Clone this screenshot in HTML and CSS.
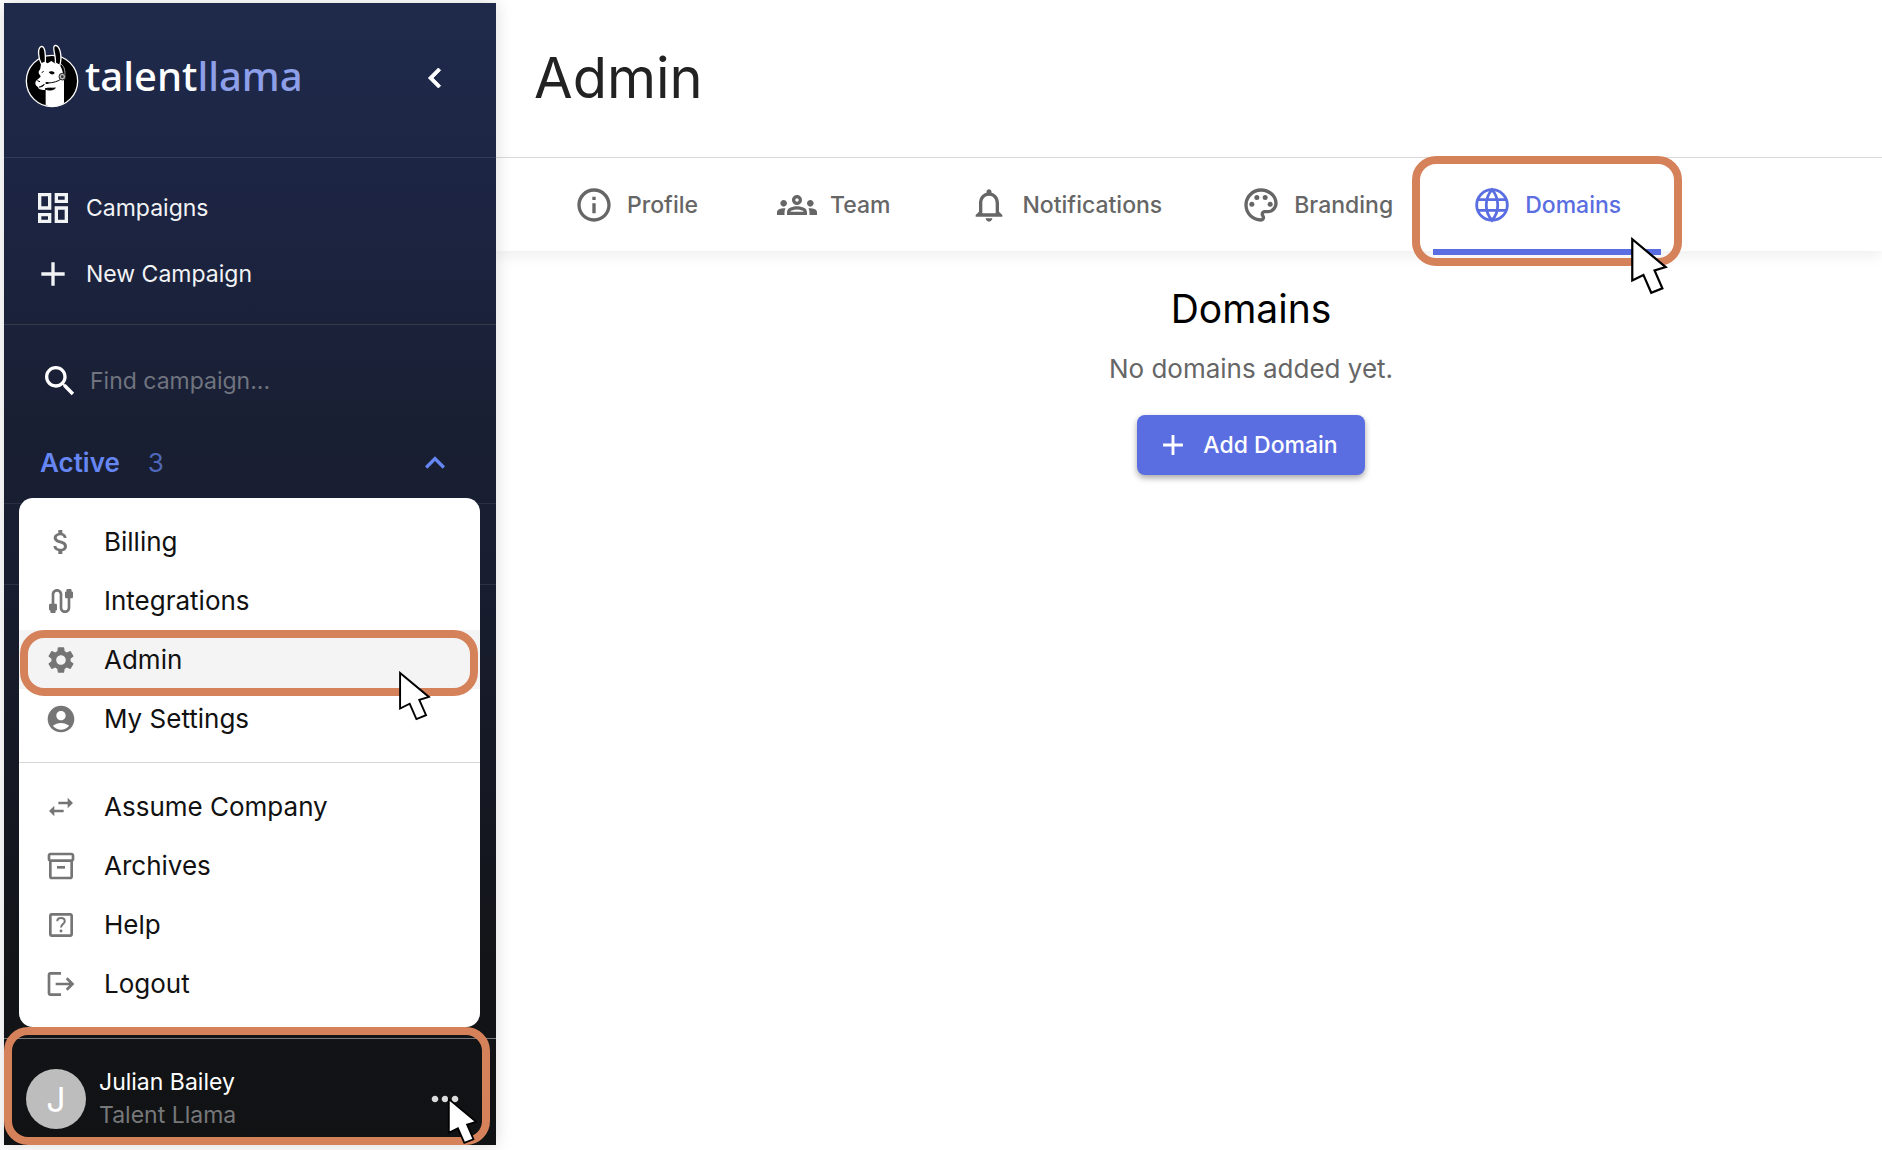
FILE: index.html
```html
<!DOCTYPE html>
<html lang="en">
<head>
    <meta charset="UTF-8">
    <meta name="viewport" content="width=device-width, initial-scale=1.0">
    <title>Admin - Talent Llama</title>
    <link rel="stylesheet" href="styles.css">
</head>
<body>
    <aside class="sidebar">
        <div class="sidebar-header">
            <a class="logo" href="#">
                <svg class="logo-mark" viewBox="16 26 162 192">
                    <circle cx="97" cy="137" r="77" fill="#000" stroke="#fff" stroke-width="4"/>
                    <path d="M66 88C54 66 54 38 64 34C76 30 78 56 77 82Z" fill="#000" stroke="#fff" stroke-width="4"/>
                    <path d="M107 82C110 62 96 36 105 31C118 27 130 56 120 92Z" fill="#000" stroke="#fff" stroke-width="4"/>
                    <path d="M65 83L76 79L84 84L95 77L105 84L117 86C128 96 132 118 133 140V204C116 216 94 216 78 209V164C66 165 54 161 56 156C46 151 44 140 52 134L63 124C62 118 54 114 58 106C63 104 62 94 65 83Z" fill="#fff"/>
                    <path d="M87 110C93 106 103 108 105 113C102 119 92 119 87 110Z" fill="#000"/>
                    <path d="M66 112L72 108M53 136L61 139M58 155C66 155 72 152 74 146M76 161C87 166 101 165 107 158C98 160 86 156 76 161Z" fill="#000" stroke="#000" stroke-width="3"/>
                    <path d="M82 143C100 143 116 138 126 130" fill="none" stroke="#000" stroke-width="3"/>
                    <ellipse cx="82" cy="143" rx="5" ry="3" fill="#000"/>
                    <path d="M124 86C135 94 137 108 135 122" fill="none" stroke="#aaa" stroke-width="3"/>
                    <circle cx="128" cy="124" r="10" fill="#bbb" stroke="#222" stroke-width="3"/>
                    <circle cx="128" cy="124" r="4" fill="#333"/>
                </svg>
                <span class="logo-text">talent<span class="logo-accent">llama</span></span>
            </a>
            <button class="icon-button" aria-label="Collapse sidebar">
                <svg class="icon" viewBox="0 0 24 24"><path d="M15.41 7.41 14 6l-6 6 6 6 1.41-1.41L10.83 12z" stroke="currentColor" stroke-width=".5"/></svg>
            </button>
        </div>

        <nav class="sidebar-nav">
            <a class="nav-link" href="#">
                <svg class="icon" viewBox="0 0 24 24"><path d="M19 5v2h-4V5h4M9 5v6H5V5h4m10 8v6h-4v-6h4M9 17v2H5v-2h4M21 3h-8v6h8V3zM11 3H3v10h8V3zm10 8h-8v10h8V11zm-10 4H3v6h8v-6z"/></svg>
                Campaigns
            </a>
            <a class="nav-link" href="#">
                <svg class="icon" viewBox="0 0 24 24"><path d="M19 13h-6v6h-2v-6H5v-2h6V5h2v6h6v2z"/></svg>
                New Campaign
            </a>
        </nav>

        <div class="search">
            <label for="search" aria-label="Find campaign">
                <svg class="icon" viewBox="0 0 24 24"><path d="M15.5 14h-.79l-.28-.27C15.41 12.59 16 11.11 16 9.5 16 5.91 13.09 3 9.5 3S3 5.91 3 9.5 5.91 16 9.5 16c1.61 0 3.09-.59 4.23-1.57l.27.28v.79l5 4.99L20.49 19l-4.99-5zm-6 0C7.01 14 5 11.99 5 9.5S7.01 5 9.5 5 14 7.01 14 9.5 11.99 14 9.5 14z"/></svg>
            </label>
            <input type="text" id="search" placeholder="Find campaign...">
        </div>

        <button class="section-toggle">
            <span class="section-title">Active</span>
            <span class="section-count">3</span>
            <svg class="icon" viewBox="0 0 24 24"><path d="m12 8-6 6 1.41 1.41L12 10.83l4.59 4.58L18 14z"/></svg>
        </button>
        <div class="section-row"></div>

        <div class="account">
            <span class="avatar">J</span>
            <div class="account-info">
                <div class="account-name">Julian Bailey</div>
                <div class="account-company">Talent Llama</div>
            </div>
            <button class="icon-button more-button" aria-label="Account menu">
                <svg class="icon" viewBox="0 0 24 24"><path d="M6 10c-1.1 0-2 .9-2 2s.9 2 2 2 2-.9 2-2-.9-2-2-2zm12 0c-1.1 0-2 .9-2 2s.9 2 2 2 2-.9 2-2-.9-2-2-2zm-6 0c-1.1 0-2 .9-2 2s.9 2 2 2 2-.9 2-2-.9-2-2-2z"/></svg>
            </button>
            <div class="highlight highlight-account"></div>
            <svg class="cursor cursor-account" viewBox="-2 -2 34 52"><path d="M0 0V37L10 32L17 48L27 44L20 28L30 25Z"/></svg>

            <div class="menu">
                <div class="menu-group">
                    <button class="menu-item">
                        <svg class="icon" viewBox="0 0 24 24"><path d="M11.8 10.9c-2.27-.59-3-1.2-3-2.15 0-1.09 1.01-1.85 2.7-1.85 1.78 0 2.44.85 2.5 2.1h2.21c-.07-1.72-1.12-3.3-3.21-3.81V3h-3v2.16c-1.94.42-3.5 1.68-3.5 3.61 0 2.31 1.91 3.46 4.7 4.13 2.5.6 3 1.48 3 2.41 0 .69-.49 1.79-2.7 1.79-2.06 0-2.87-.92-2.98-2.1h-2.2c.12 2.19 1.76 3.42 3.68 3.83V21h3v-2.15c1.95-.37 3.5-1.5 3.5-3.55 0-2.84-2.43-3.81-4.7-4.4z"/></svg>
                        Billing
                    </button>
                    <button class="menu-item">
                        <svg class="icon" viewBox="0 0 24 24"><path d="M20 5V4c0-.55-.45-1-1-1h-2c-.55 0-1 .45-1 1v1h-1v4c0 .55.45 1 1 1h1v7c0 1.1-.9 2-2 2s-2-.9-2-2V7c0-2.21-1.79-4-4-4S5 4.79 5 7v7H4c-.55 0-1 .45-1 1v4h1v1c0 .55.45 1 1 1h2c.55 0 1-.45 1-1v-1h1v-4c0-.55-.45-1-1-1H7V7c0-1.1.9-2 2-2s2 .9 2 2v10c0 2.21 1.79 4 4 4s4-1.79 4-4v-7h1c.55 0 1-.45 1-1V5h-1z"/></svg>
                        Integrations
                    </button>
                    <button class="menu-item selected">
                        <svg class="icon" viewBox="0 0 24 24"><path d="M19.14 12.94c.04-.3.06-.61.06-.94 0-.32-.02-.64-.07-.94l2.03-1.58c.18-.14.23-.41.12-.61l-1.92-3.32c-.12-.22-.37-.29-.59-.22l-2.39.96c-.5-.38-1.03-.7-1.62-.94l-.36-2.54c-.04-.24-.24-.41-.48-.41h-3.84c-.24 0-.43.17-.47.41l-.36 2.54c-.59.24-1.13.57-1.62.94l-2.39-.96c-.22-.08-.47 0-.59.22L2.74 8.87c-.12.21-.08.47.12.61l2.03 1.58c-.05.3-.09.63-.09.94s.02.64.07.94l-2.03 1.58c-.18.14-.23.41-.12.61l1.92 3.32c.12.22.37.29.59.22l2.39-.96c.5.38 1.03.7 1.62.94l.36 2.54c.05.24.24.41.48.41h3.84c.24 0 .44-.17.47-.41l.36-2.54c.59-.24 1.13-.56 1.62-.94l2.39.96c.22.08.47 0 .59-.22l1.92-3.32c.12-.22.07-.47-.12-.61l-2.01-1.58zM12 15.6c-1.98 0-3.6-1.62-3.6-3.6s1.62-3.6 3.6-3.6 3.6 1.62 3.6 3.6-1.62 3.6-3.6 3.6z"/></svg>
                        Admin
                        <span class="highlight highlight-admin"></span>
                        <svg class="cursor cursor-admin" viewBox="-2 -2 34 52"><path d="M0 0V37L10 32L17 48L27 44L20 28L30 25Z"/></svg>
                    </button>
                    <button class="menu-item">
                        <svg class="icon" viewBox="0 0 24 24"><path d="M12 2C6.48 2 2 6.48 2 12s4.48 10 10 10 10-4.48 10-10S17.52 2 12 2zm0 4c1.93 0 3.5 1.57 3.5 3.5S13.93 13 12 13s-3.5-1.57-3.5-3.5S10.07 6 12 6zm0 14c-2.03 0-4.43-.82-6.14-2.88C7.55 15.8 9.68 15 12 15s4.45.8 6.14 2.12C16.43 19.18 14.03 20 12 20z"/></svg>
                        My Settings
                    </button>
                </div>
                <div class="menu-group">
                    <button class="menu-item">
                        <svg class="icon" viewBox="0 0 24 24"><path d="M6.99 11 3 15l3.99 4v-3H14v-2H6.99v-3zM21 9l-3.99-4v3H10v2h7.01v3L21 9z"/></svg>
                        Assume Company
                    </button>
                    <button class="menu-item">
                        <svg class="icon" viewBox="0 0 24 24"><path d="M20 2H4c-1 0-2 .9-2 2v3.01c0 .72.43 1.34 1 1.69V20c0 1.1 1.1 2 2 2h14c.9 0 2-.9 2-2V8.7c.57-.35 1-.97 1-1.69V4c0-1.1-1-2-2-2zm-1 18H5V9h14v11zm1-13H4V4h16v3z"/><path d="M9 12h6v2H9z"/></svg>
                        Archives
                    </button>
                    <button class="menu-item">
                        <svg class="icon" viewBox="0 0 24 24"><path d="M19 3H5c-1.1 0-2 .9-2 2v14c0 1.1.9 2 2 2h14c1.1 0 2-.9 2-2V5c0-1.1-.9-2-2-2zm0 16H5V5h14v14z"/><path d="M9.2 9.2C9.2 7.5 10.4 6.7 12 6.7c1.7 0 2.8 1 2.8 2.4 0 2-2.8 2.3-2.8 4.7" fill="none" stroke="currentColor" stroke-width="1.5"/><circle cx="12" cy="16.5" r="1.1"/></svg>
                        Help
                    </button>
                    <button class="menu-item">
                        <svg class="icon" viewBox="0 0 24 24"><path d="m17 7-1.41 1.41L18.17 11H8v2h10.17l-2.58 2.58L17 17l5-5zM4 5h8V3H4c-1.1 0-2 .9-2 2v14c0 1.1.9 2 2 2h8v-2H4V5z"/></svg>
                        Logout
                    </button>
                </div>
            </div>
        </div>
    </aside>

    <main class="main">
        <header class="page-header">
            <h1>Admin</h1>
        </header>

        <div class="tabs">
            <button class="tab">
                <svg class="icon" viewBox="0 0 24 24"><path d="M11 7h2v2h-2zm0 4h2v6h-2zm1-9C6.48 2 2 6.48 2 12s4.48 10 10 10 10-4.48 10-10S17.52 2 12 2zm0 18c-4.41 0-8-3.59-8-8s3.59-8 8-8 8 3.59 8 8-3.59 8-8 8z"/></svg>
                Profile
            </button>
            <button class="tab">
                <svg class="icon" viewBox="0 0 24 24"><path d="M4 13c1.1 0 2-.9 2-2s-.9-2-2-2-2 .9-2 2 .9 2 2 2zm1.13 1.1C4.76 14.04 4.39 14 4 14c-.99 0-1.93.21-2.78.58C.48 14.9 0 15.62 0 16.43V18h4.5v-1.61c0-.83.23-1.61.63-2.29zM20 13c1.1 0 2-.9 2-2s-.9-2-2-2-2 .9-2 2 .9 2 2 2zm4 3.43c0-.81-.48-1.53-1.22-1.85C21.93 14.21 20.99 14 20 14c-.39 0-.76.04-1.13.1.4.68.63 1.46.63 2.29V18H24v-1.57zm-7.76-2.78C15.07 13.13 13.63 12.75 12 12.75s-3.07.39-4.24.9C6.68 14.13 6 15.21 6 16.39V18h12v-1.61c0-1.18-.68-2.26-1.76-2.74zM8.07 16c.09-.23.13-.39.91-.69.97-.38 1.99-.56 3.02-.56s2.05.18 3.02.56c.77.3.81.46.91.69H8.07zM12 8c.55 0 1 .45 1 1s-.45 1-1 1-1-.45-1-1 .45-1 1-1m0-2c-1.66 0-3 1.34-3 3s1.34 3 3 3 3-1.34 3-3-1.34-3-3-3z"/></svg>
                Team
            </button>
            <button class="tab">
                <svg class="icon" viewBox="0 0 24 24"><path d="M12 22c1.1 0 2-.9 2-2h-4c0 1.1.9 2 2 2zm6-6v-5c0-3.07-1.63-5.64-4.5-6.32V4c0-.83-.67-1.5-1.5-1.5s-1.5.67-1.5 1.5v.68C7.64 5.36 6 7.92 6 11v5l-2 2v1h16v-1l-2-2zm-2 1H8v-6c0-2.48 1.51-4.5 4-4.5s4 2.02 4 4.5v6z"/></svg>
                Notifications
            </button>
            <button class="tab">
                <svg class="icon" viewBox="0 0 24 24"><path d="M12 22C6.49 22 2 17.51 2 12S6.49 2 12 2s10 4.04 10 9c0 3.31-2.69 6-6 6h-1.77c-.28 0-.5.22-.5.5 0 .12.05.23.13.33.41.47.64 1.06.64 1.67 0 1.38-1.12 2.5-2.5 2.5zm0-18c-4.41 0-8 3.59-8 8s3.59 8 8 8c.28 0 .5-.22.5-.5 0-.16-.08-.28-.14-.35-.41-.46-.63-1.05-.63-1.65 0-1.38 1.12-2.5 2.5-2.5H16c2.21 0 4-1.79 4-4 0-3.86-3.59-7-8-7z"/><circle cx="6.5" cy="11.5" r="1.5"/><circle cx="9.5" cy="7.5" r="1.5"/><circle cx="14.5" cy="7.5" r="1.5"/><circle cx="17.5" cy="11.5" r="1.5"/></svg>
                Branding
            </button>
            <button class="tab active">
                <svg class="icon" viewBox="0 0 24 24"><g fill="none" stroke="currentColor" stroke-width="1.7"><circle cx="12" cy="12" r="9.2"/><path d="M3.5 8.8h17M3.5 15.2h17M12 2.8C7.4 8 7.4 16 12 21.2C16.6 16 16.6 8 12 2.8Z"/></g></svg>
                Domains
                <span class="highlight highlight-tab"></span>
                <svg class="cursor cursor-tab" viewBox="-2 -2 34 52"><path d="M0 0V37L10 32L17 48L27 44L20 28L30 25Z"/></svg>
            </button>
        </div>

        <section class="content">
            <h2>Domains</h2>
            <p>No domains added yet.</p>
            <button class="add-button">
                <svg class="icon" viewBox="0 0 24 24"><path d="M19 13h-6v6h-2v-6H5v-2h6V5h2v6h6v2z"/></svg>
                Add Domain
            </button>
        </section>
    </main>
</body>
</html>
```
FILE: styles.css
```css
* {
    box-sizing: border-box;
}

body {
    margin: 0;
    padding: 3px 0 5px 4px;
    min-height: 100vh;
    display: flex;
    background-color: #fff;
    font-family: 'Inter', sans-serif;
}

button {
    padding: 0;
    border: none;
    background: none;
    font: inherit;
    color: inherit;
    cursor: pointer;
}

a {
    color: inherit;
    text-decoration: none;
}

.icon {
    width: 40px;
    height: 40px;
    flex-shrink: 0;
    fill: currentColor;
}

/* sidebar */
.sidebar {
    position: relative;
    z-index: 1;
    width: 492px;
    flex-shrink: 0;
    display: flex;
    flex-direction: column;
    color: #fff;
    background: linear-gradient(#1f2a4b, #1c2442 18%, #191f32 38%, #181d30 50%, #121417 85%, #111214);
    box-shadow: 0 0 16px rgba(0, 0, 0, 0.15);
}

.sidebar-header {
    height: 155px;
    padding: 0 41px 4px 21px;
    display: flex;
    align-items: center;
    justify-content: space-between;
    border-bottom: 1px solid #333c54;
}

.logo {
    padding-bottom: 5px;
    display: flex;
    align-items: center;
    gap: 6px;
}

.logo-mark {
    width: 54px;
    height: 64px;
}

.logo-text {
    font-family: 'Noto Sans', sans-serif;
    font-size: 40px;
    font-weight: 500;
    line-height: 48px;
}

.logo-accent {
    color: #8d9fe8;
}

.icon-button {
    display: flex;
}

.sidebar-nav {
    padding: 17px 0;
    border-bottom: 1px solid #333a4c;
}

.nav-link {
    height: 66px;
    padding: 0 29px;
    display: flex;
    align-items: center;
    gap: 13px;
    font-size: 23px;
    color: #f2f3f5;
}

.search {
    padding: 36px 36px 21px;
    display: flex;
    align-items: center;
    gap: 10px;
}

.search label {
    display: flex;
}

.search input {
    flex: 1;
    min-width: 0;
    height: 40px;
    padding: 0;
    border: none;
    outline: none;
    background: none;
    font: inherit;
    font-size: 23px;
    color: #fff;
}

.search input::placeholder {
    color: #70747f;
    opacity: 1;
}

.section-toggle {
    height: 82px;
    padding: 0 41px 0 36px;
    display: flex;
    align-items: center;
    gap: 28px;
    font-size: 26px;
    color: #6586f3;
    border-bottom: 1px solid #2b3042;
}

.section-title {
    font-weight: 600;
}

.section-count {
    flex: 1;
    text-align: left;
    color: #4e67b8;
}

.section-row {
    height: 81px;
    border-bottom: 1px solid #2b3042;
}

/* account bar with its menu */
.account {
    position: relative;
    margin-top: auto;
    padding: 27px 31px 13px 22px;
    display: flex;
    align-items: center;
    gap: 13px;
    border-top: 1px solid #77797c;
}

.avatar {
    width: 60px;
    height: 60px;
    display: flex;
    align-items: center;
    justify-content: center;
    border-radius: 50%;
    background-color: #bdbdbd;
    font-size: 34px;
}

.account-info {
    flex: 1;
    font-size: 23px;
    line-height: 33px;
}

.account-company {
    color: #77787a;
}

.more-button {
    color: #dcdcdc;
}

.menu {
    position: absolute;
    left: 15px;
    right: 16px;
    bottom: calc(100% + 12px);
    border-radius: 14px;
    background-color: #fff;
    color: #111;
}

.menu-group {
    padding: 14px 0;
}

.menu-group + .menu-group {
    border-top: 1px solid #d6d6d6;
}

.menu-item {
    position: relative;
    width: 100%;
    height: 59px;
    padding: 0 26px;
    display: flex;
    align-items: center;
    gap: 27px;
    font-size: 26px;
}

.menu-item.selected {
    z-index: 1;
    background-color: #f4f4f4;
}

.menu-item .icon {
    width: 32px;
    height: 32px;
    color: #757575;
}

/* highlight frames and pointers */
.highlight {
    position: absolute;
    border: 8px solid #d5825a;
    border-radius: 24px;
    pointer-events: none;
}

.highlight-account {
    inset: -12px 6px 0 0;
}

.highlight-admin {
    inset: 0 2px -7px 1px;
}

.highlight-tab {
    inset: -2px -21px -15px;
}

.cursor {
    position: absolute;
    width: 34px;
    height: 52px;
    fill: #fff;
    stroke: #000;
    stroke-width: 2px;
    pointer-events: none;
}

.cursor-account {
    right: 18px;
    bottom: 0;
    width: 31px;
    height: 48px;
}

.cursor-admin {
    right: 49px;
    top: 41px;
    width: 33px;
    height: 50px;
}

.cursor-tab {
    right: -7px;
    top: 79px;
    width: 38px;
    height: 58px;
}

/* main area */
.main {
    flex: 1;
    min-width: 0;
}

.page-header {
    height: 155px;
    padding: 0 38px 4px;
    display: flex;
    align-items: center;
    border-bottom: 1px solid #dcdcdc;
}

h1 {
    margin: 0;
    font-size: 56px;
    font-weight: 400;
    color: #222;
}

.tabs {
    height: 93px;
    padding: 0 39px;
    display: flex;
    box-shadow: 0 6px 12px rgba(0, 0, 0, 0.06);
}

.tab {
    position: relative;
    padding: 0 40px 0 39px;
    display: flex;
    align-items: center;
    gap: 13px;
    font-size: 23px;
    font-weight: 500;
    color: #666;
}

.tab.active {
    color: #5a6ee1;
}

.tab.active::after {
    content: '';
    position: absolute;
    left: 0;
    right: 0;
    bottom: -4px;
    height: 6px;
    background-color: #5a6ee1;
}

.tab .cursor {
    z-index: 1;
}

.content {
    padding: 34px 0 0 124px;
    display: flex;
    flex-direction: column;
    align-items: center;
}

h2 {
    margin: 0;
    font-size: 39px;
    line-height: 48px;
    font-weight: 400;
    color: #000;
}

.content p {
    margin: 20px 0 30px;
    font-size: 26px;
    line-height: 32px;
    color: #666;
}

.add-button {
    height: 60px;
    padding: 0 27px 0 19px;
    display: flex;
    align-items: center;
    gap: 13px;
    border-radius: 8px;
    background-color: #5a6ee1;
    color: #fff;
    font-size: 23px;
    font-weight: 500;
    box-shadow: 0 3px 6px rgba(0, 0, 0, 0.35);
}

.add-button .icon {
    width: 34px;
    height: 34px;
}
```
